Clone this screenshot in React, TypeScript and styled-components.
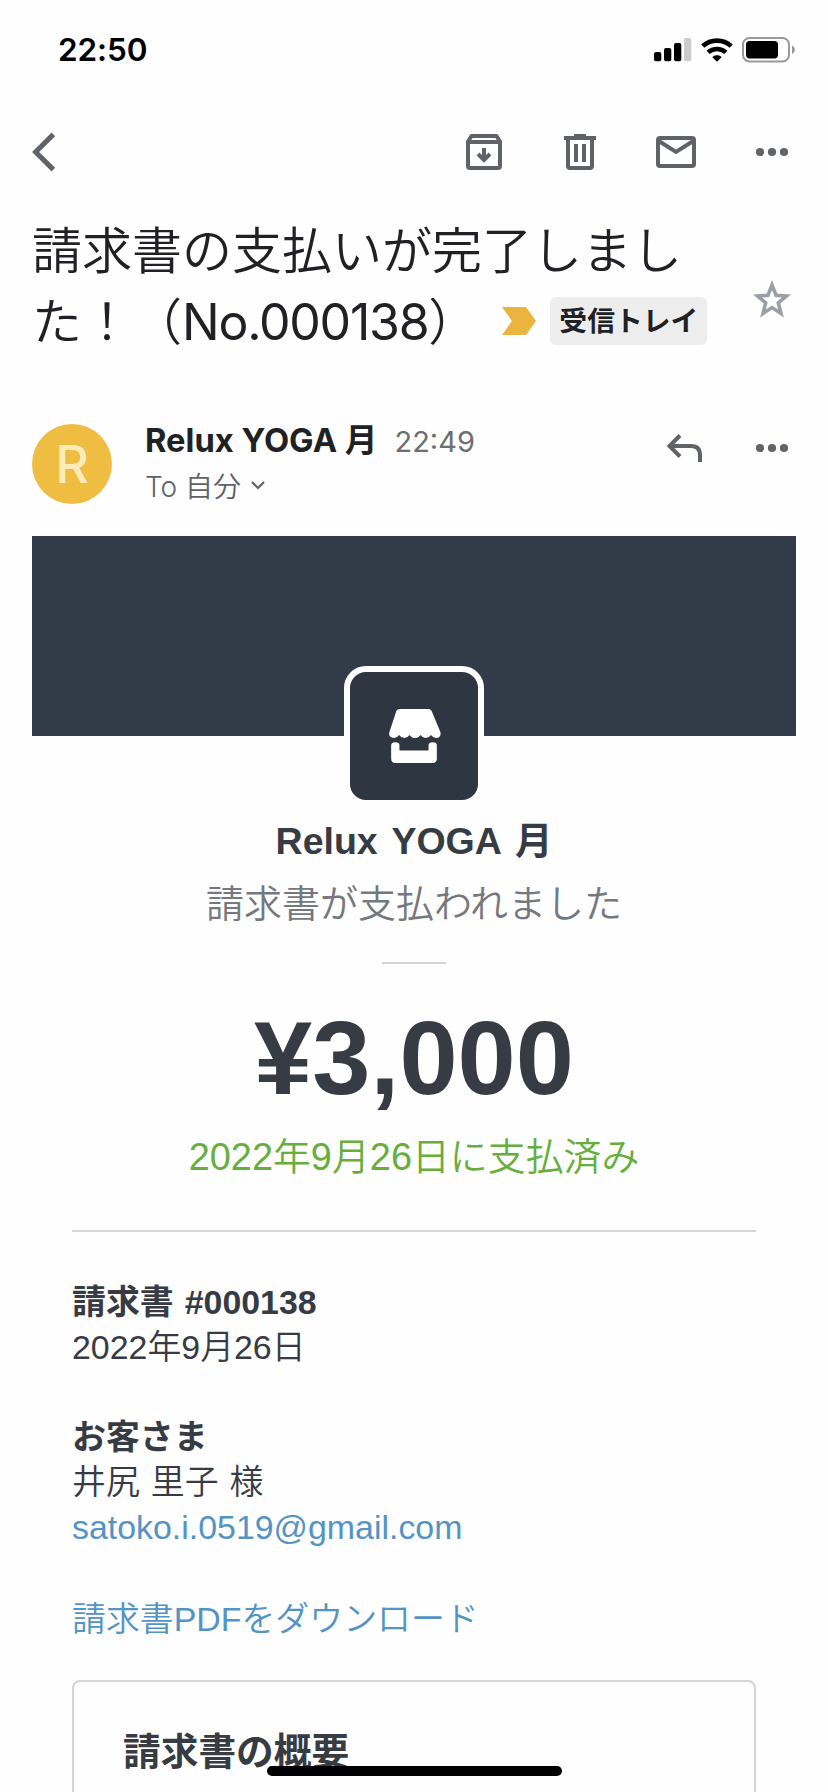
import React from 'react';
import styled, { createGlobalStyle } from 'styled-components';

const GlobalStyle = createGlobalStyle`
  * { box-sizing: border-box; }
  html, body { margin: 0; padding: 0; background: #fefefe; }
  body { overflow: hidden; }
  svg { display: block; flex: none; }
`;

const UI = `Inter, "Noto Sans CJK JP", sans-serif`;
const MAIL = `"Liberation Sans", "Noto Sans CJK JP", sans-serif`;

const Screen = styled.div`
  position: relative;
  width: 828px;
  height: 1792px;
  overflow: hidden;
  background: #fefefe;
  color: #202124;
  font-family: ${UI};
  white-space: nowrap;
`;

const StatusBar = styled.header`
  display: flex;
  align-items: center;
  justify-content: space-between;
  height: 96px;
  padding: 3px 32px 0 58px;
`;

const Clock = styled.time`
  font-size: 31.5px;
  font-weight: 600;
  line-height: 40px;
  letter-spacing: -0.1px;
  color: #000;
`;

const StatusIcons = styled.div`
  display: flex;
  align-items: center;
  gap: 9px;
`;

const Toolbar = styled.nav`
  display: flex;
  align-items: center;
  justify-content: space-between;
  height: 112px;
  padding: 0 32px 0 20px;
`;

const ToolActions = styled.div`
  display: flex;
  gap: 48px;
`;

const IconButton = styled.button`
  display: flex;
  align-items: center;
  justify-content: center;
  width: 48px;
  height: 48px;
  padding: 0;
  border: 0;
  background: none;
  color: #5f6368;
`;

const SubjectRow = styled.section`
  display: flex;
  justify-content: space-between;
  height: 216px;
  padding: 6px 32px 0 32px;
`;

const Subject = styled.h1`
  margin: 0;
  font-size: 50px;
  font-weight: 350;
  line-height: 71px;
`;

const SubjectLine = styled.div`
  display: flex;
  align-items: center;
  height: 71px;
`;

const SubjectText = styled.span`
  padding-top: 3px;
`;

const SubjectNumber = styled.span`
  font-weight: 400;
  letter-spacing: -1.25px;
`;

const ImportantMark = styled.svg`
  margin-left: 24px;
`;

const LabelChip = styled.span`
  display: flex;
  align-items: center;
  height: 48px;
  margin-left: 14px;
  padding: 1px 9px 0;
  border-radius: 6px;
  background: #ededed;
  font-size: 27.8px;
  font-weight: 700;
  line-height: 48px;
`;

const StarButton = styled(IconButton)`
  margin-top: 62px;
  color: #9aa0a6;
`;

const SenderRow = styled.section`
  display: flex;
  height: 112px;
  padding: 0 32px 0 32px;
`;

const Avatar = styled.div`
  width: 80px;
  height: 80px;
  border-radius: 50%;
  background: #efbd41;
  color: #fbebb9;
  font-size: 52px;
  font-weight: 500;
  line-height: 81px;
  text-align: center;
`;

const SenderInfo = styled.div`
  flex: 1;
  margin: -2px 0 0 33px;
`;

const SenderLine = styled.div`
  display: flex;
  align-items: baseline;
  height: 47px;
  line-height: 36px;
`;

const SenderName = styled.strong`
  font-size: 32.7px;
  font-weight: 700;
`;

const SentTime = styled.span`
  margin-left: 17px;
  color: #6b6e73;
  font-size: 29px;
`;

const Recipient = styled.div`
  display: flex;
  align-items: center;
  gap: 10px;
  color: #5f6368;
  font-size: 28px;
  font-weight: 350;
  line-height: 36px;
`;

const SenderActions = styled.div`
  display: flex;
  gap: 40px;
`;

const Message = styled.article`
  margin: 0 32px;
  color: #373b43;
  font-family: ${MAIL};
`;

const Banner = styled.div`
  display: flex;
  justify-content: center;
  height: 200px;
  padding-top: 130px;
  background: #323c48;
`;

const MerchantLogo = styled.div`
  display: flex;
  align-items: center;
  justify-content: center;
  width: 140px;
  height: 140px;
  border: 6px solid #fefefe;
  border-radius: 22px;
  background: #2d3641;
`;

const Summary = styled.section`
  display: flex;
  flex-direction: column;
  align-items: center;
  height: 494px;
  padding-top: 78px;
`;

const Merchant = styled.h2`
  margin: 0;
  font-size: 37.5px;
  font-weight: 700;
  line-height: 54px;
  word-spacing: 4px;
`;

const StatusText = styled.p`
  margin: 9px 0 0;
  color: #75787e;
  font-size: 38px;
  font-weight: 350;
  line-height: 54px;
`;

const ShortRule = styled.hr`
  width: 64px;
  height: 2px;
  margin: 31px 0 0;
  border: 0;
  background: #d3d4d5;
`;

const Amount = styled.div`
  margin-top: 34px;
  font-size: 104.6px;
  font-weight: 700;
  line-height: 120px;
`;

const PaidOn = styled.p`
  margin: 12px 0 0;
  color: #68ae3c;
  font-size: 37.9px;
  font-weight: 350;
  line-height: 54px;
`;

const Details = styled.section`
  margin: 0 40px;
  padding-top: 48px;
  border-top: 2px solid #d3d4d5;
  font-size: 33.9px;
  line-height: 45px;
  word-spacing: 1.6px;
`;

const Block = styled.div<{ $gap: number }>`
  margin-bottom: ${(p) => p.$gap}px;
`;

const DetailTitle = styled.div`
  font-weight: 700;
`;

const DetailText = styled.div`
  font-weight: 350;
`;

const MailLink = styled.a`
  display: block;
  color: #5394c4;
  font-weight: 350;
`;

const OverviewCard = styled.section`
  height: 160px;
  padding: 43px 49px;
  border: 2px solid #d3d4d5;
  border-radius: 8px;
  background: #fefefe;
`;

const OverviewTitle = styled.h3`
  margin: 0;
  font-size: 37.7px;
  font-weight: 700;
  line-height: 54px;
`;

const HomeIndicator = styled.div`
  position: absolute;
  left: 267px;
  top: 1766px;
  width: 295px;
  height: 10px;
  border-radius: 5px;
  background: #000;
`;

const MoreIcon = () => (
  <svg width="48" height="48" viewBox="0 0 48 48" fill="currentColor">
    <circle cx="12" cy="24" r="4.1" />
    <circle cx="24" cy="24" r="4.1" />
    <circle cx="36" cy="24" r="4.1" />
  </svg>
);

export default function App() {
  return (
    <>
      <GlobalStyle />
      <Screen>
        <StatusBar>
          <Clock>22:50</Clock>
          <StatusIcons>
            <svg width="38" height="24" viewBox="0 0 38 24">
              <rect x="0" y="14" width="7.3" height="9.3" rx="2" />
              <rect x="10" y="10" width="7.3" height="13.3" rx="2" />
              <rect x="20" y="5" width="7.3" height="18.3" rx="2" />
              <rect x="30" y="0" width="7.3" height="23.3" rx="2" fill="#cbcbcb" />
            </svg>
            <svg width="32" height="24" viewBox="0 0 32 24" fill="none" stroke="#000" strokeWidth="4.6">
              <path d="M1.8 8.2C9.6 .7 22.4 .7 30.2 8.2" />
              <path d="M7.2 14.4C12 9.8 20 9.8 24.8 14.4" />
              <path d="M11.4 19.2C13.6 16.6 18.4 16.6 20.6 19.2L16 23.8Z" fill="#000" stroke="none" />
            </svg>
            <svg width="54" height="26" viewBox="0 0 54 26">
              <rect x="1" y="1" width="46" height="23.4" rx="6.5" fill="none" stroke="#999" strokeWidth="2" />
              <rect x="4" y="4" width="32" height="17.4" rx="3.6" />
              <path d="M50 8.5c3.8 1.5 3.8 7 0 8.5z" fill="#999" />
            </svg>
          </StatusIcons>
        </StatusBar>

        <Toolbar>
          <IconButton aria-label="戻る">
            <svg width="48" height="48" viewBox="0 0 48 48" fill="none" stroke="currentColor" strokeWidth="5">
              <path d="M33.4 6.4L15.6 24l17.8 17.6" />
            </svg>
          </IconButton>
          <ToolActions>
            <IconButton aria-label="アーカイブ">
              <svg width="48" height="48" viewBox="0 0 48 48" fill="none" stroke="currentColor" strokeWidth="4">
                <path d="M8 13.5L11.5 8h25L40 13.5V38q0 2-2 2H10q-2 0-2-2zM8 14h32" strokeLinejoin="round" />
                <path d="M24 20v12M18 26l6 6 6-6" />
              </svg>
            </IconButton>
            <IconButton aria-label="削除">
              <svg width="48" height="48" viewBox="0 0 48 48" fill="none" stroke="currentColor" strokeWidth="4">
                <path d="M8 10h32M18 8h12" />
                <path d="M12 10v28q0 2 2 2h20q2 0 2-2V10M20 16v18M28 16v18" />
              </svg>
            </IconButton>
            <IconButton aria-label="未読にする">
              <svg width="48" height="48" viewBox="0 0 48 48" fill="none" stroke="currentColor" strokeWidth="4">
                <rect x="6" y="10" width="36" height="28" rx="2" />
                <path d="M6 12.5l18 11.5 18-11.5" />
              </svg>
            </IconButton>
            <IconButton aria-label="その他">
              <MoreIcon />
            </IconButton>
          </ToolActions>
        </Toolbar>

        <SubjectRow>
          <Subject>
            <SubjectLine>
              <SubjectText>請求書の支払いが完了しまし</SubjectText>
            </SubjectLine>
            <SubjectLine>
              <SubjectText>
                た！（<SubjectNumber>No.000138</SubjectNumber>）
              </SubjectText>
              <ImportantMark width="34" height="28" viewBox="0 0 34 28">
                <path d="M0 0h24l10 14-10 14H0l10-14z" fill="#e9b53f" />
              </ImportantMark>
              <LabelChip>受信トレイ</LabelChip>
            </SubjectLine>
          </Subject>
          <StarButton aria-label="スター">
            <svg width="48" height="48" viewBox="0 0 48 48" fill="none" stroke="currentColor" strokeWidth="3.6">
              <path d="M24 9l4 10.200 10.500.7-8.200 6.900 2.700 10.600L24 31.600l-9 5.800 2.700-10.600-8.200-6.900 10.500-.7z" />
            </svg>
          </StarButton>
        </SubjectRow>

        <SenderRow>
          <Avatar>R</Avatar>
          <SenderInfo>
            <SenderLine>
              <SenderName>Relux YOGA 月</SenderName>
              <SentTime>22:49</SentTime>
            </SenderLine>
            <Recipient>
              <span>To 自分</span>
              <svg width="14" height="12" viewBox="0 0 14 12" fill="none" stroke="currentColor" strokeWidth="2.2">
                <path d="M1 1l6 6 6-6" />
              </svg>
            </Recipient>
          </SenderInfo>
          <SenderActions>
            <IconButton aria-label="返信">
              <svg width="48" height="48" viewBox="0 0 48 48" fill="none" stroke="currentColor" strokeWidth="4">
                <path d="M20 11.5L9.5 22 20 32.500M10 22h21q9 0 9 9v7" />
              </svg>
            </IconButton>
            <IconButton aria-label="その他">
              <MoreIcon />
            </IconButton>
          </SenderActions>
        </SenderRow>

        <Message>
          <Banner>
            <MerchantLogo>
              <svg width="54" height="54" viewBox="0 0 52 52" fill="#fff">
                <path d="M12 0h28q2 0 3 2l8.300 20q1.500 5-4 6-3 0-5-3-2 3-5 3t-5-3q-2 3-5.300 3t-5.300-3q-2 3-5 3t-5-3q-2 3-5 3-6-1-4.300-6L9 2q1-2 3-2z" />
                <path d="M4 35q0-3 4-3t4 3v5h28v-5q0-3 4-3t4 3v13q0 4-4 4H8q-4 0-4-4z" />
              </svg>
            </MerchantLogo>
          </Banner>
          <Summary>
            <Merchant>Relux YOGA 月</Merchant>
            <StatusText>請求書が支払われました</StatusText>
            <ShortRule />
            <Amount>¥3,000</Amount>
            <PaidOn>2022年9月26日に支払済み</PaidOn>
          </Summary>
          <Details>
            <Block $gap={45}>
              <DetailTitle>請求書 #000138</DetailTitle>
              <DetailText>2022年9月26日</DetailText>
            </Block>
            <Block $gap={47}>
              <DetailTitle>お客さま</DetailTitle>
              <DetailText>井尻 里子 様</DetailText>
              <MailLink>satoko.i.0519@gmail.com</MailLink>
            </Block>
            <Block $gap={38}>
              <MailLink>請求書PDFをダウンロード</MailLink>
            </Block>
            <OverviewCard>
              <OverviewTitle>請求書の概要</OverviewTitle>
            </OverviewCard>
          </Details>
        </Message>
        <HomeIndicator />
      </Screen>
    </>
  );
}
